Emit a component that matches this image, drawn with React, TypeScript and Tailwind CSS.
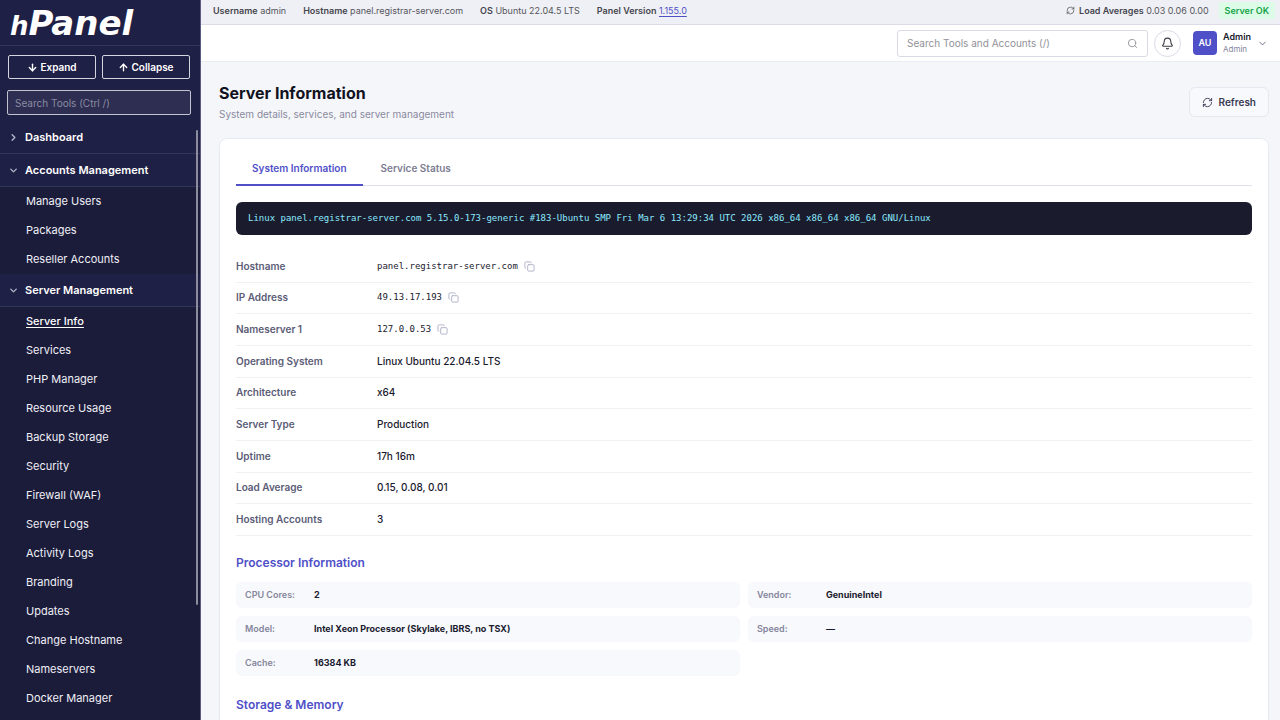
import React from 'react';
import { ArrowDown, ArrowUp, Bell, ChevronDown, ChevronRight, Copy, RefreshCw, Search } from 'lucide-react';

const accountLinks = ['Manage Users', 'Packages', 'Reseller Accounts'];

const serverLinks = [
  'Server Info',
  'Services',
  'PHP Manager',
  'Resource Usage',
  'Backup Storage',
  'Security',
  'Firewall (WAF)',
  'Server Logs',
  'Activity Logs',
  'Branding',
  'Updates',
  'Change Hostname',
  'Nameservers',
  'Docker Manager',
];

const systemRows = [
  { label: 'Hostname', value: 'panel.registrar-server.com', copy: true },
  { label: 'IP Address', value: '49.13.17.193', copy: true },
  { label: 'Nameserver 1', value: '127.0.0.53', copy: true },
  { label: 'Operating System', value: 'Linux Ubuntu 22.04.5 LTS' },
  { label: 'Architecture', value: 'x64' },
  { label: 'Server Type', value: 'Production' },
  { label: 'Uptime', value: '17h 16m' },
  { label: 'Load Average', value: '0.15, 0.08, 0.01' },
  { label: 'Hosting Accounts', value: '3' },
];

const processor = [
  { label: 'CPU Cores:', value: '2' },
  { label: 'Vendor:', value: 'GenuineIntel' },
  { label: 'Model:', value: 'Intel Xeon Processor (Skylake, IBRS, no TSX)' },
  { label: 'Speed:', value: '—' },
  { label: 'Cache:', value: '16384 KB' },
];

const NavHeading: React.FC<{ title: string; open?: boolean }> = ({ title, open }) => {
  const Icon = open ? ChevronDown : ChevronRight;
  return (
    <button
      type="button"
      aria-expanded={!!open}
      className="flex h-[33px] w-full shrink-0 items-center gap-1.5 border-b border-[#34355a] bg-[#1f2045] pl-2 text-left text-[11px] font-semibold text-white"
    >
      <Icon size={11} strokeWidth={3} className="text-[#b4b4c8]" />
      {title}
    </button>
  );
};

const NavList: React.FC<{ links: string[]; active?: string }> = ({ links, active }) => (
  <ul>
    {links.map((link) => (
      <li key={link}>
        <a
          href="#"
          className={
            link === active
              ? 'flex h-[29px] items-center pl-[26px] text-[11px] font-medium text-white underline underline-offset-2'
              : 'flex h-[29px] items-center pl-[26px] text-[11px] text-[#f0f0f6]'
          }
        >
          {link}
        </a>
      </li>
    ))}
  </ul>
);

const Sidebar: React.FC = () => (
  <aside className="relative flex w-[201px] shrink-0 flex-col overflow-hidden border-r border-[#5b5a80] bg-[#1b1b3a]">
    <div className="bg-[#1f2045]">
      <div className="flex h-[46px] items-center border-b border-[#34355a] pl-[10px]">
        <a href="#" className="font-['DejaVu_Sans',sans-serif] text-[34px] leading-none font-bold text-white italic">
          <span className="text-[26px]">h</span>Panel
        </a>
      </div>
      <div className="grid grid-cols-2 gap-1.5 pt-[9px] pr-[10px] pl-2">
        <button type="button" className="flex h-6 items-center justify-center gap-0.5 rounded-xs border border-[#d5d5de] text-[10px] font-semibold text-white">
          <ArrowDown size={11} strokeWidth={3} />
          Expand
        </button>
        <button type="button" className="flex h-6 items-center justify-center gap-0.5 rounded-xs border border-[#d5d5de] text-[10px] font-semibold text-white">
          <ArrowUp size={11} strokeWidth={3} />
          Collapse
        </button>
      </div>
      <div className="pt-[11px] pr-[9px] pb-1.5 pl-[7px]">
        <input
          type="text"
          aria-label="Search tools"
          placeholder="Search Tools (Ctrl /)"
          className="block h-[25px] w-full rounded-xs border border-[#c3c3d0] bg-[#2d2e51] px-[7px] text-[10px] text-white placeholder:text-[#8b8ba3]"
        />
      </div>
    </div>
    <nav>
      <NavHeading title="Dashboard" />
      <NavHeading title="Accounts Management" open />
      <NavList links={accountLinks} />
      <NavHeading title="Server Management" open />
      <NavList links={serverLinks} active="Server Info" />
    </nav>
    <div className="absolute top-[130px] right-[2px] h-[475px] w-[2px] rounded-full bg-[#8d8c9c]" />
  </aside>
);

const StatusBar: React.FC = () => (
  <div className="flex h-[25px] shrink-0 items-center justify-between border-b border-[#dcdce8] bg-[#eff0f5] pr-[5px] pb-[3px] pl-3 text-[9px] text-[#55555c]">
    <div className="flex gap-[17px]">
      <span><b className="font-semibold text-[#46464e]">Username</b> admin</span>
      <span><b className="font-semibold text-[#46464e]">Hostname</b> panel.registrar-server.com</span>
      <span><b className="font-semibold text-[#46464e]">OS</b> Ubuntu 22.04.5 LTS</span>
      <span>
        <b className="font-semibold text-[#46464e]">Panel Version</b>{' '}
        <a href="#" className="text-[#4f50c8] underline underline-offset-2">1.155.0</a>
      </span>
    </div>
    <div className="flex items-center gap-[10px]">
      <span className="flex items-center gap-1">
        <RefreshCw size={9} />
        <span><b className="font-semibold text-[#46464e]">Load Averages</b> 0.03 0.06 0.00</span>
      </span>
      <span className="rounded-xs bg-[#dcfce7] px-1.5 leading-[17px] font-semibold text-[#16a34a]">Server OK</span>
    </div>
  </div>
);

const Header: React.FC = () => (
  <header className="flex h-[37px] shrink-0 items-center justify-end border-b border-[#ebebf2] bg-white pr-3">
    <label className="flex h-[27px] w-[251px] items-center rounded-[3px] border border-[#dadae6] px-[9px]">
      <input
        type="search"
        aria-label="Search tools and accounts"
        placeholder="Search Tools and Accounts (/)"
        className="min-w-0 flex-1 text-[10px] outline-none placeholder:text-[#929298]"
      />
      <Search size={11} className="text-[#929298]" />
    </label>
    <button type="button" aria-label="Notifications" className="ml-1.5 flex size-[27px] items-center justify-center rounded-full border border-[#dadae6] text-[#3c3c46]">
      <Bell size={13} />
    </button>
    <button type="button" className="ml-3 flex items-center text-left">
      <span className="flex size-6 items-center justify-center rounded bg-[#4f50c8] text-[9px] font-semibold text-white">AU</span>
      <span className="ml-1.5 flex flex-col">
        <span className="text-[9px] leading-[13px] font-semibold text-[#1a1a2e]">Admin</span>
        <span className="text-[8px] leading-[13px] text-[#85859c]">Admin</span>
      </span>
      <ChevronDown size={11} className="ml-1.5 text-[#66667c]" />
    </button>
  </header>
);

const SystemInformation: React.FC = () => (
  <section className="rounded-lg border border-[#e8e9f2] bg-white px-4 pt-[14px] pb-8">
    <div role="tablist" className="flex h-[33px] gap-0.5 border-b border-[#dfe0ea] text-[10px] font-semibold">
      <button type="button" role="tab" aria-selected="true" className="h-[33px] border-b-2 border-[#4f50c8] px-4 text-[#4f50c8]">
        System Information
      </button>
      <button type="button" role="tab" aria-selected="false" className="h-[33px] border-b-2 border-transparent px-4 text-[#7c7d92]">
        Service Status
      </button>
    </div>

    <pre className="mt-4 h-[33px] overflow-hidden rounded-md bg-[#1a1c2e] px-3 font-['DejaVu_Sans_Mono',monospace] text-[9px] leading-[32px] text-[#8be9fd]">
      Linux panel.registrar-server.com 5.15.0-173-generic #183-Ubuntu SMP Fri Mar 6 13:29:34 UTC 2026 x86_64 x86_64 x86_64 GNU/Linux
    </pre>

    <dl className="mt-4 grid min-h-[285px] auto-rows-fr text-[10px]">
      {systemRows.map((row) => (
        <div key={row.label} className="flex items-center border-b border-[#f0f0f5]">
          <dt className="w-[141px] font-semibold text-[#5b5c76]">{row.label}</dt>
          <dd className="flex items-center gap-1.5 text-[#1a1a2e]">
            {row.copy ? (
              <>
                <span className="font-['DejaVu_Sans_Mono',monospace] text-[9px]">{row.value}</span>
                <button type="button" aria-label={`Copy ${row.label}`} className="text-[#b0b0c8]">
                  <Copy size={11} />
                </button>
              </>
            ) : (
              <span className="font-medium">{row.value}</span>
            )}
          </dd>
        </div>
      ))}
    </dl>

    <h2 className="mt-[18px] text-xs leading-[18px] font-semibold text-[#4f50c8]">Processor Information</h2>
    <dl className="mt-[10px] grid grid-cols-2 gap-2 text-[9px]">
      {processor.map((item) => (
        <div key={item.label} className="flex h-[26px] items-center rounded-md bg-[#f8f9fd] px-[9px]">
          <dt className="w-[69px] font-semibold text-[#85869b]">{item.label}</dt>
          <dd className="font-bold text-[#1a1a2e]">{item.value}</dd>
        </div>
      ))}
    </dl>

    <h2 className="mt-5 text-xs leading-[18px] font-semibold text-[#4f50c8]">Storage &amp; Memory</h2>
  </section>
);

const App: React.FC = () => {
  return (
    <div className="flex h-screen overflow-hidden bg-[#f5f6fa] font-['Inter',sans-serif]">
      <Sidebar />
      <div className="flex min-w-0 flex-1 flex-col">
        <StatusBar />
        <Header />
        <main className="min-h-0 flex-1 overflow-hidden pt-5 pr-[11px] pl-[18px]">
          <div className="mb-4 flex items-center justify-between">
            <div>
              <h1 className="text-base leading-[22px] font-bold text-[#12121f]">Server Information</h1>
              <p className="mt-0.5 text-[10px] leading-4 text-[#8a8a9e]">System details, services, and server management</p>
            </div>
            <button type="button" className="flex h-[30px] items-center gap-1.5 rounded-md border border-[#e6e7f0] bg-[#f8f9fd] px-3 text-[10px] font-semibold text-[#3a3b52]">
              <RefreshCw size={11} />
              Refresh
            </button>
          </div>
          <SystemInformation />
        </main>
      </div>
    </div>
  );
};

export default App;
